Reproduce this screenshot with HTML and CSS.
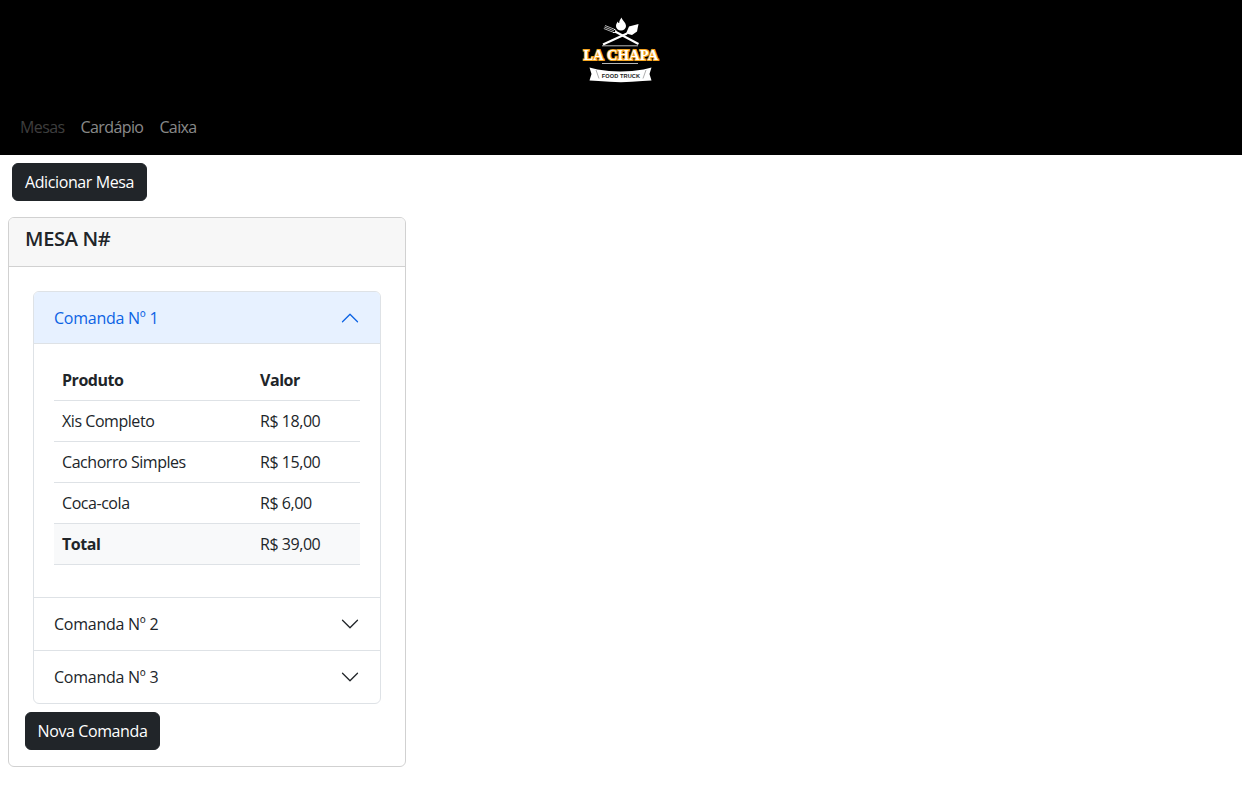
FILE: index.html
```html
<!DOCTYPE html>
<html lang="pt-BR">
<head>
<meta charset="UTF-8">
<meta name="viewport" content="width=device-width, initial-scale=1.0">
<title>La Chapa - Mesas</title>
<link rel="stylesheet" href="styles.css">
</head>
<body>
    <header class="navbar">
        <div class="brand">
            <svg class="logo" width="80" height="66" viewBox="0 0 80 66">
                <!-- flame -->
                <path d="M40.500 .5c.6 3 4.500 5 4.500 8.500a5 4.500 0 0 1-10 0c0-2 1-3.500 2-4.500 0 1 .5 1.500 1.200 1.500 0-2 1-3.500 2.300-5.500z" fill="#fff"/>
                <!-- fork -->
                <path d="M34 14.500l23.500 12.500" stroke="#fff" stroke-width="2" fill="none"/>
                <path d="M24 8.500l9.500 3.800M22.800 11.500l9.500 3.800M23.400 10l9.500 3.800" stroke="#fff" stroke-width=".7" fill="none"/>
                <path d="M33 12.300c2 .8 2.500 1.500 2 2.400-.5.8-1.500 1-3 .8" stroke="#fff" stroke-width="1" fill="none"/>
                <!-- spatula -->
                <path d="M22 27.500l24-11" stroke="#fff" stroke-width="2" fill="none"/>
                <path d="M45 16.500l3-7 9.500-2.500-1.500 7.500-5 3.500z" fill="#fff"/>
                <path d="M21 28.800h36M21 46.500h36" stroke="#ccc" stroke-width=".9" fill="none"/>
                <text class="logo-title" x="40" y="43" text-anchor="middle">LA CHAPA</text>
                <!-- banner -->
                <path d="M8.500 50.500l8 2c15 2.500 31 2.500 46 0l8-2-2 6.500 2 6.500-9 .6c-14 1.400-29 1.400-44 0l-9-.6 2-6.500z" fill="#fff"/>
                <path d="M15 53l3 8.500M65 53l-3 8.500" stroke="#777" stroke-width=".6" fill="none"/>
                <text class="logo-sub" x="40" y="60.500" text-anchor="middle">FOOD TRUCK</text>
            </svg>
        </div>
        <nav class="nav">
            <a class="nav-link active" href="#">Mesas</a>
            <a class="nav-link" href="#">Cardápio</a>
            <a class="nav-link" href="#">Caixa</a>
        </nav>
    </header>

    <div class="toolbar">
        <button class="btn">Adicionar Mesa</button>
    </div>

    <div class="card">
        <div class="card-header">MESA N#</div>
        <div class="card-body">
            <div class="accordion">
                <div class="accordion-item">
                    <div class="accordion-button open">
                        <span>Comanda Nº 1</span>
                        <svg class="chevron" width="20" height="20" viewBox="0 0 16 16"><path fill-rule="evenodd" d="M1.646 11.354a.5.5 0 0 0 .708 0L8 5.707l5.646 5.647a.5.5 0 0 0 .708-.708l-6-6a.5.5 0 0 0-.708 0l-6 6a.5.5 0 0 0 0 .708z"/></svg>
                    </div>
                    <div class="accordion-body">
                        <table class="table">
                            <thead>
                                <tr><th class="col-product">Produto</th><th>Valor</th></tr>
                            </thead>
                            <tbody>
                                <tr><td>Xis Completo</td><td>R$ 18,00</td></tr>
                                <tr><td>Cachorro Simples</td><td>R$ 15,00</td></tr>
                                <tr><td>Coca-cola</td><td>R$ 6,00</td></tr>
                                <tr class="total"><th>Total</th><td>R$ 39,00</td></tr>
                            </tbody>
                        </table>
                    </div>
                </div>
                <div class="accordion-item">
                    <div class="accordion-button">
                        <span>Comanda Nº 2</span>
                        <svg class="chevron" width="20" height="20" viewBox="0 0 16 16"><path fill-rule="evenodd" d="M1.646 4.646a.5.5 0 0 1 .708 0L8 10.293l5.646-5.647a.5.5 0 0 1 .708.708l-6 6a.5.5 0 0 1-.708 0l-6-6a.5.5 0 0 1 0-.708z"/></svg>
                    </div>
                </div>
                <div class="accordion-item">
                    <div class="accordion-button">
                        <span>Comanda Nº 3</span>
                        <svg class="chevron" width="20" height="20" viewBox="0 0 16 16"><path fill-rule="evenodd" d="M1.646 4.646a.5.5 0 0 1 .708 0L8 10.293l5.646-5.647a.5.5 0 0 1 .708.708l-6 6a.5.5 0 0 1-.708 0l-6-6a.5.5 0 0 1 0-.708z"/></svg>
                    </div>
                </div>
            </div>
            <button class="btn">Nova Comanda</button>
        </div>
    </div>
</body>
</html>
```

FILE: styles.css
```css
body {
    font-family: "Open Sans", "Noto Sans", sans-serif;
    font-size: 16px;
    line-height: 24px;
    letter-spacing: -0.4px;
    color: #212529;
    margin: 0;
    background-color: #fff;
}

.navbar {
    background-color: #000;
    padding: 8px 12px;
}

.brand {
    height: 99px;
    padding-top: 9px;
    box-sizing: border-box;
    text-align: center;
}

.logo {
    display: block;
    margin: 0 auto;
}

.logo-title {
    font-family: "Liberation Serif", serif;
    font-weight: bold;
    font-size: 14.5px;
    letter-spacing: 0.2px;
    fill: #fff;
    stroke: #f5a623;
    stroke-width: 2.2px;
    paint-order: stroke;
}

.logo-sub {
    font-family: "Liberation Sans", sans-serif;
    font-weight: bold;
    font-size: 5.6px;
    letter-spacing: 0.1px;
    fill: #222;
}

.nav {
    display: flex;
}

.nav-link {
    padding: 8px;
    color: rgba(255, 255, 255, 0.55);
    letter-spacing: -0.6px;
    text-decoration: none;
}

.nav-link.active {
    color: rgba(255, 255, 255, 0.25);
}

.toolbar {
    padding: 8px 12px 16px;
}

.btn {
    display: block;
    height: 38px;
    width: 135px;
    padding: 0;
    font: inherit;
    letter-spacing: inherit;
    color: #fff;
    background-color: #212529;
    border: 1px solid #212529;
    border-radius: 6px;
}

.card {
    width: 398px;
    margin-left: 8px;
    box-sizing: border-box;
    border: 1px solid #d1d1d1;
    border-radius: 6px;
}

.card-header {
    height: 49px;
    box-sizing: border-box;
    padding: 6px 16px;
    font-size: 20px;
    line-height: 30px;
    font-weight: 600;
    letter-spacing: -0.3px;
    background-color: #f7f7f7;
    border-bottom: 1px solid #d1d1d1;
    border-radius: 5px 5px 0 0;
}

.card-body {
    padding: 16px;
}

.accordion {
    margin: 8px;
    border: 1px solid #dee2e6;
    border-radius: 6px;
}

.accordion-item + .accordion-item {
    border-top: 1px solid #dee2e6;
}

.accordion-button {
    display: flex;
    justify-content: space-between;
    align-items: center;
    height: 52px;
    box-sizing: border-box;
    padding: 0 20px;
    letter-spacing: -0.25px;
}

.accordion-button.open {
    color: #0c63e4;
    background-color: #e7f1ff;
    border-bottom: 1px solid #dee2e6;
    border-radius: 5px 5px 0 0;
}

.chevron {
    fill: currentColor;
}

.accordion-body {
    padding: 16px 20px;
}

.table {
    width: 100%;
    margin-bottom: 16px;
    border-collapse: separate;
    border-spacing: 0;
}

.table th,
.table td {
    height: 41px;
    box-sizing: border-box;
    padding: 8px;
    text-align: left;
    letter-spacing: -0.45px;
    border-bottom: 1px solid #dee2e6;
}

.col-product {
    width: 198px;
}

.total {
    background-color: #f8f9fa;
}
```
